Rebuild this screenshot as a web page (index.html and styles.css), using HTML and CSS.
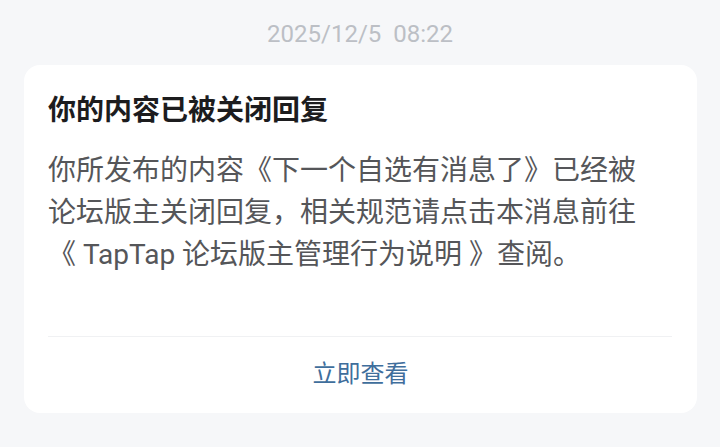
FILE: index.html
```html
<!DOCTYPE html>
<html lang="zh-CN">
<head>
<meta charset="utf-8">
<link rel="stylesheet" href="styles.css">
</head>
<body>
<div class="page">
  <div class="time">2025/12/5&nbsp;&nbsp;08:22</div>
  <div class="card">
    <div class="content">
      <div class="title">你的内容已被关闭回复</div>
      <div class="text">你所发布的内容《下一个自选有消息了》已经被论坛版主关闭回复，相关规范请点击本消息前往《 TapTap 论坛版主管理行为说明 》查阅。</div>
    </div>
    <div class="divider"></div>
    <div class="action">立即查看</div>
  </div>
</div>
</body>
</html>
```

FILE: styles.css
```css
html, body {
  margin: 0;
  padding: 0;
  background: #f6f7f9;
}
body {
  width: 720px;
  height: 447px;
  overflow: hidden;
  font-family: Roboto, "Noto Sans CJK SC", sans-serif;
}
.page {
  display: flex;
  flex-direction: column;
  align-items: stretch;
}
.time {
  height: 65px;
  line-height: 68px;
  text-align: center;
  font-size: 24px;
  color: #bcbfc5;
}
.card {
  margin: 0 23px 0 24px;
  height: 348px;
  background: #ffffff;
  border-radius: 16px;
  display: flex;
  flex-direction: column;
}
.content {
  flex: 1;
  padding: 28px 24px 0 24px;
}
.title {
  font-size: 28px;
  line-height: 36px;
  font-weight: 700;
  color: #1c1c1e;
}
.text {
  margin-top: 21px;
  max-width: 600px;
  font-size: 28px;
  line-height: 42px;
  color: #555659;
}
.divider {
  height: 1px;
  margin: 0 25px 0 24px;
  background: #f0f1f3;
}
.action {
  height: 74px;
  line-height: 74px;
  padding-bottom: 2px;
  text-align: center;
  font-size: 24px;
  color: #3f6e9c;
}
```
